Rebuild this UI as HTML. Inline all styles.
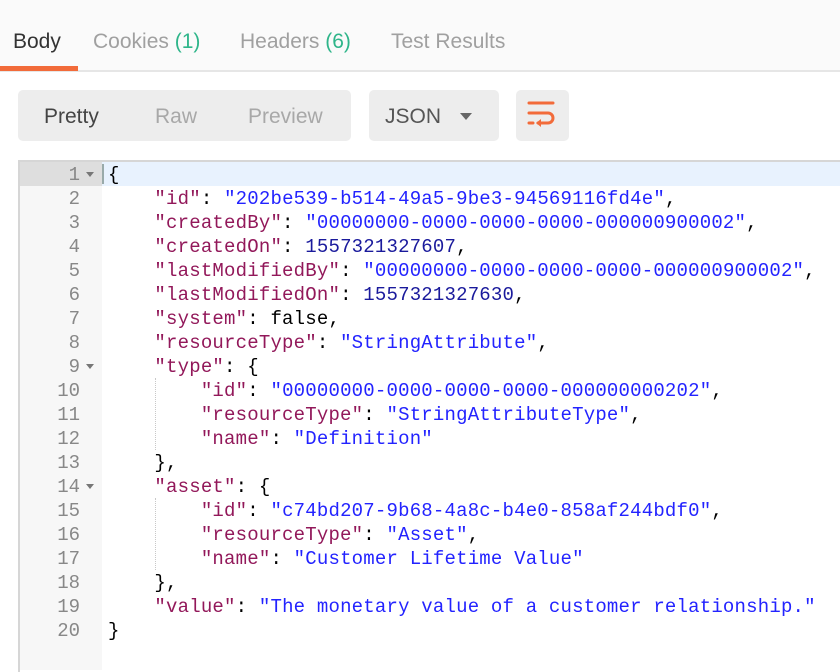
<!DOCTYPE html>
<html><head><style>
body{margin:0;width:840px;height:670px;background:#fff;position:relative;overflow:hidden;font-family:"Liberation Sans",sans-serif}
.tabbar{position:absolute;left:0;top:0;width:840px;height:70px;background:#fafafa;border-bottom:2px solid #e6e6e6}
.tab{position:absolute;top:30px;font-size:21px;color:#a0a0a0}
.g{color:#2fb58a}
.ul{position:absolute;left:0;top:66px;width:78px;height:5px;background:#f26b3a}
.btn{position:absolute;top:90px;height:51px;background:#ededed;border-radius:5px}
.bt{position:absolute;top:105px;font-size:21px;color:#a8a8a8}
.code{position:absolute;left:18px;top:160px;width:822px;height:510px;border-top:2px solid #d6d6d6;border-left:2px solid #d6d6d6;background:#fff}
.gut{position:absolute;left:20px;top:162px;width:82px;height:508px;background:#f7f7f7}
.hl{position:absolute;left:102px;top:162px;width:738px;height:24px;background:#e8f2fe}
.hlg{position:absolute;left:20px;top:162px;width:82px;height:24px;background:#dedede}
.ln{position:absolute;left:20px;width:60px;text-align:right;font:19px/24px "Liberation Mono",monospace;color:#888;margin-top:1px}
.l{position:absolute;left:108px;font:19px/24px "Liberation Mono",monospace;color:#000;white-space:pre;letter-spacing:0.2px;margin-top:1px}
.k{color:#92185a}.s{color:#2323ff}.n{color:#1a1a9c}
.arr{position:absolute;left:86px;width:0;height:0;border-left:4px solid transparent;border-right:4px solid transparent;border-top:5px solid #777}
.guide{position:absolute;left:155px;width:0;border-left:1px dotted #c8c8c8}
</style></head><body>
<div class="tabbar"></div>
<div class="tab" style="left:13px;color:#333">Body</div>
<div class="tab" style="left:93px">Cookies <span class="g">(1)</span></div>
<div class="tab" style="left:240px">Headers <span class="g">(6)</span></div>
<div class="tab" style="left:391px">Test Results</div>
<div class="ul"></div>
<div class="btn" style="left:18px;width:333px"></div>
<div class="btn" style="left:369px;width:130px"></div>
<div class="btn" style="left:516px;width:53px"></div>
<div class="bt" style="left:44px;color:#444">Pretty</div>
<div class="bt" style="left:155px">Raw</div>
<div class="bt" style="left:248px">Preview</div>
<div class="bt" style="left:385px;color:#555">JSON</div>
<div style="position:absolute;left:460px;top:113px;border-left:6px solid transparent;border-right:6px solid transparent;border-top:7px solid #666"></div>
<svg style="position:absolute;left:526px;top:100px" width="34" height="34" viewBox="0 0 34 34"><g stroke="#f26b3a" stroke-width="3" fill="none" stroke-linecap="round"><path d="M3 3H27"/><path d="M3 13H22a5 5 0 0 1 0 10H12"/><path d="M3 23H7"/></g><path d="M10 23l5-4v8z" fill="#f26b3a"/></svg>
<div class="code"></div>
<div class="gut"></div>
<div class="hlg"></div>
<div class="hl"></div>
<div style="position:absolute;left:102px;top:164px;width:2px;height:20px;background:#9aa"></div>
<div class="guide" style="top:378px;height:72px"></div>
<div class="guide" style="top:498px;height:72px"></div>
<div class="arr" style="top:172px"></div>
<div class="arr" style="top:364px"></div>
<div class="arr" style="top:484px"></div>
<div class="ln" style="top:162px">1</div><div class="ln" style="top:186px">2</div><div class="ln" style="top:210px">3</div><div class="ln" style="top:234px">4</div><div class="ln" style="top:258px">5</div><div class="ln" style="top:282px">6</div><div class="ln" style="top:306px">7</div><div class="ln" style="top:330px">8</div><div class="ln" style="top:354px">9</div><div class="ln" style="top:378px">10</div><div class="ln" style="top:402px">11</div><div class="ln" style="top:426px">12</div><div class="ln" style="top:450px">13</div><div class="ln" style="top:474px">14</div><div class="ln" style="top:498px">15</div><div class="ln" style="top:522px">16</div><div class="ln" style="top:546px">17</div><div class="ln" style="top:570px">18</div><div class="ln" style="top:594px">19</div><div class="ln" style="top:618px">20</div>
<div class="l" style="top:162px">{</div>
<div class="l" style="top:186px">    <span class="k">"id"</span>: <span class="s">"202be539-b514-49a5-9be3-94569116fd4e"</span>,</div>
<div class="l" style="top:210px">    <span class="k">"createdBy"</span>: <span class="s">"00000000-0000-0000-0000-000000900002"</span>,</div>
<div class="l" style="top:234px">    <span class="k">"createdOn"</span>: <span class="n">1557321327607</span>,</div>
<div class="l" style="top:258px">    <span class="k">"lastModifiedBy"</span>: <span class="s">"00000000-0000-0000-0000-000000900002"</span>,</div>
<div class="l" style="top:282px">    <span class="k">"lastModifiedOn"</span>: <span class="n">1557321327630</span>,</div>
<div class="l" style="top:306px">    <span class="k">"system"</span>: false,</div>
<div class="l" style="top:330px">    <span class="k">"resourceType"</span>: <span class="s">"StringAttribute"</span>,</div>
<div class="l" style="top:354px">    <span class="k">"type"</span>: {</div>
<div class="l" style="top:378px">        <span class="k">"id"</span>: <span class="s">"00000000-0000-0000-0000-000000000202"</span>,</div>
<div class="l" style="top:402px">        <span class="k">"resourceType"</span>: <span class="s">"StringAttributeType"</span>,</div>
<div class="l" style="top:426px">        <span class="k">"name"</span>: <span class="s">"Definition"</span></div>
<div class="l" style="top:450px">    },</div>
<div class="l" style="top:474px">    <span class="k">"asset"</span>: {</div>
<div class="l" style="top:498px">        <span class="k">"id"</span>: <span class="s">"c74bd207-9b68-4a8c-b4e0-858af244bdf0"</span>,</div>
<div class="l" style="top:522px">        <span class="k">"resourceType"</span>: <span class="s">"Asset"</span>,</div>
<div class="l" style="top:546px">        <span class="k">"name"</span>: <span class="s">"Customer Lifetime Value"</span></div>
<div class="l" style="top:570px">    },</div>
<div class="l" style="top:594px">    <span class="k">"value"</span>: <span class="s">"The monetary value of a customer relationship."</span></div>
<div class="l" style="top:618px">}</div>
</body></html>
